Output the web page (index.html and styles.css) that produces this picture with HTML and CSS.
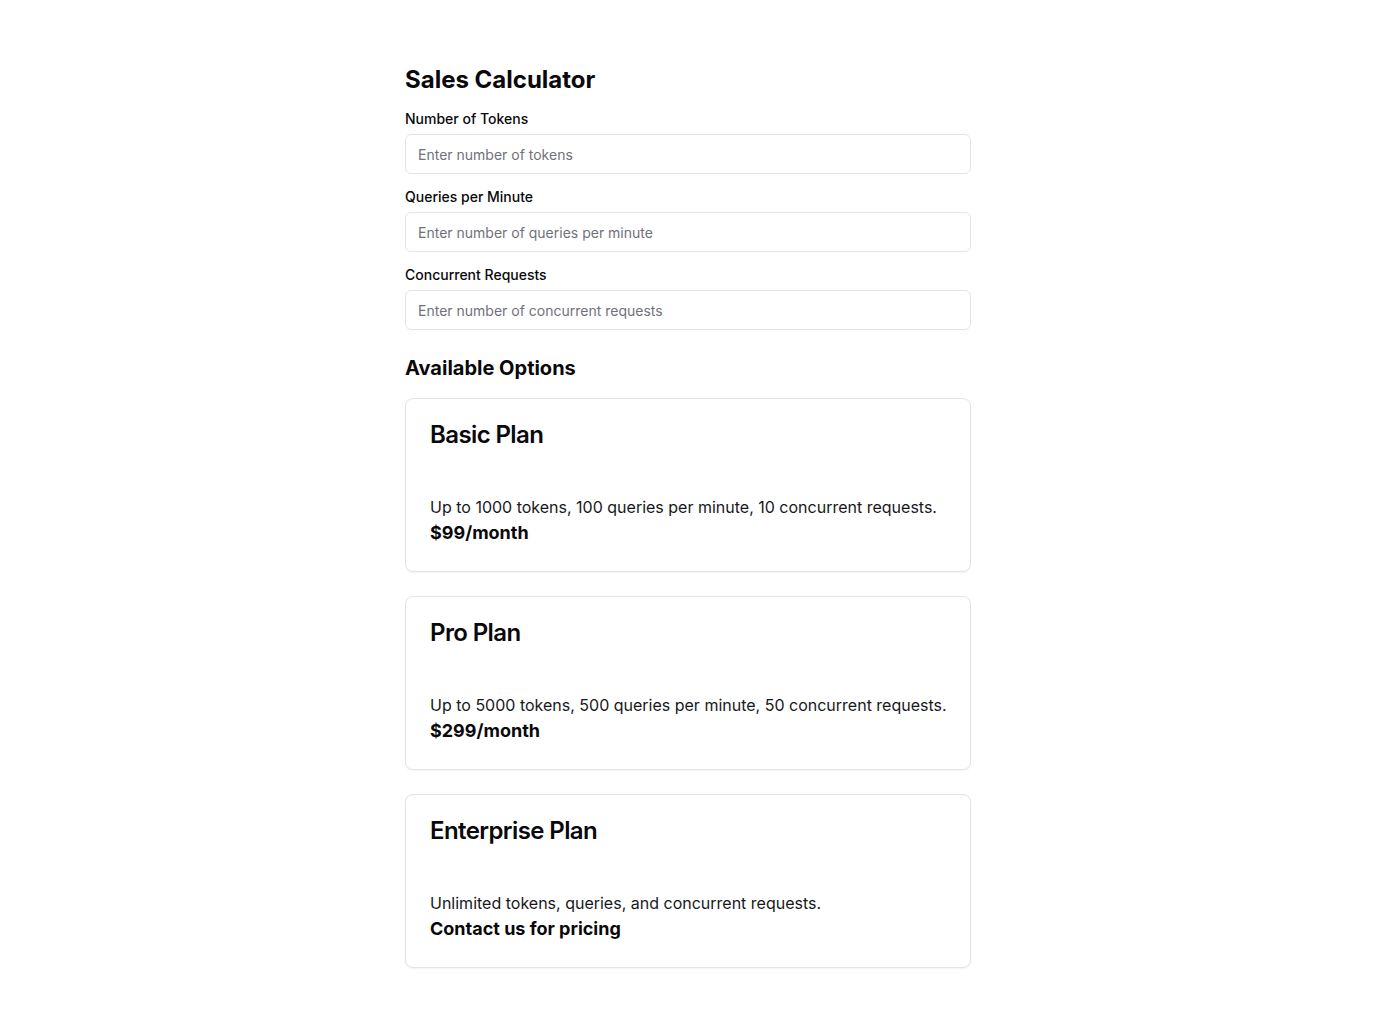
FILE: index.html
```html
<!DOCTYPE html>
<html lang="en">
<head>
<meta charset="utf-8">
<title>Sales Calculator</title>
<link rel="stylesheet" href="styles.css">
</head>
<body>
<main class="page">
  <h1 class="title">Sales Calculator</h1>
  <div class="form">
    <div class="field">
      <label class="label" for="tokens">Number of Tokens</label>
      <input class="input" id="tokens" type="number" placeholder="Enter number of tokens">
    </div>
    <div class="field">
      <label class="label" for="qpm">Queries per Minute</label>
      <input class="input" id="qpm" type="number" placeholder="Enter number of queries per minute">
    </div>
    <div class="field">
      <label class="label" for="conc">Concurrent Requests</label>
      <input class="input" id="conc" type="number" placeholder="Enter number of concurrent requests">
    </div>
  </div>
  <h2 class="subtitle">Available Options</h2>
  <div class="cards">
    <div class="card">
      <div class="card-header"><h3 class="card-title">Basic Plan</h3></div>
      <div class="card-content">
        <p class="desc">Up to 1000 tokens, 100 queries per minute, 10 concurrent requests.</p>
        <p class="price">$99/month</p>
      </div>
    </div>
    <div class="card">
      <div class="card-header"><h3 class="card-title">Pro Plan</h3></div>
      <div class="card-content">
        <p class="desc">Up to 5000 tokens, 500 queries per minute, 50 concurrent requests.</p>
        <p class="price">$299/month</p>
      </div>
    </div>
    <div class="card">
      <div class="card-header"><h3 class="card-title">Enterprise Plan</h3></div>
      <div class="card-content">
        <p class="desc">Unlimited tokens, queries, and concurrent requests.</p>
        <p class="price">Contact us for pricing</p>
      </div>
    </div>
  </div>
</main>
</body>
</html>
```
FILE: styles.css
```css
* { box-sizing: border-box; }
html, body { margin: 0; padding: 0; background: #ffffff; }
body {
  font-family: Inter, "Noto Sans", sans-serif;
  color: #09090b;
}
.page {
  width: 566px;
  margin: 0 auto;
  padding: 64px 0 40px;
}
.title {
  margin: 0 0 12px;
  font-size: 24px;
  line-height: 32px;
  font-weight: 700;
}
.form {
  display: flex;
  flex-direction: column;
  gap: 12px;
}
.field {
  display: flex;
  flex-direction: column;
  gap: 6px;
}
.label {
  font-size: 14px;
  line-height: 20px;
  padding-top: 1px;
  margin-bottom: -1px;
  font-weight: 500;
}
.input {
  height: 40px;
  width: 100%;
  border: 1px solid #e4e4e7;
  border-radius: 6px;
  padding: 0 12px;
  font-family: inherit;
  font-size: 14px;
  color: #09090b;
  background: #fff;
  outline: none;
  -moz-appearance: textfield;
}
.input::placeholder { color: #71717a; }
.input::-webkit-outer-spin-button,
.input::-webkit-inner-spin-button { -webkit-appearance: none; margin: 0; }
.subtitle {
  margin: 24px 0 16px;
  font-size: 20px;
  line-height: 28px;
  font-weight: 700;
}
.cards {
  display: flex;
  flex-direction: column;
  gap: 24px;
}
.card {
  border: 1px solid #e4e4e7;
  border-radius: 8px;
  background: #fff;
  box-shadow: 0 1px 2px rgba(0,0,0,0.05);
}
.card-header { padding: 24px 24px 0; }
.card-title {
  margin: 0;
  font-size: 24px;
  line-height: 24px;
  font-weight: 600;
  letter-spacing: -0.6px;
}
.card-content { padding: 48px 12px 24px 24px; }
.desc {
  margin: 0;
  font-size: 16px;
  line-height: 24px;
  color: #18181b;
}
.price {
  margin: 0;
  font-size: 18px;
  line-height: 28px;
  font-weight: 700;
}
```
